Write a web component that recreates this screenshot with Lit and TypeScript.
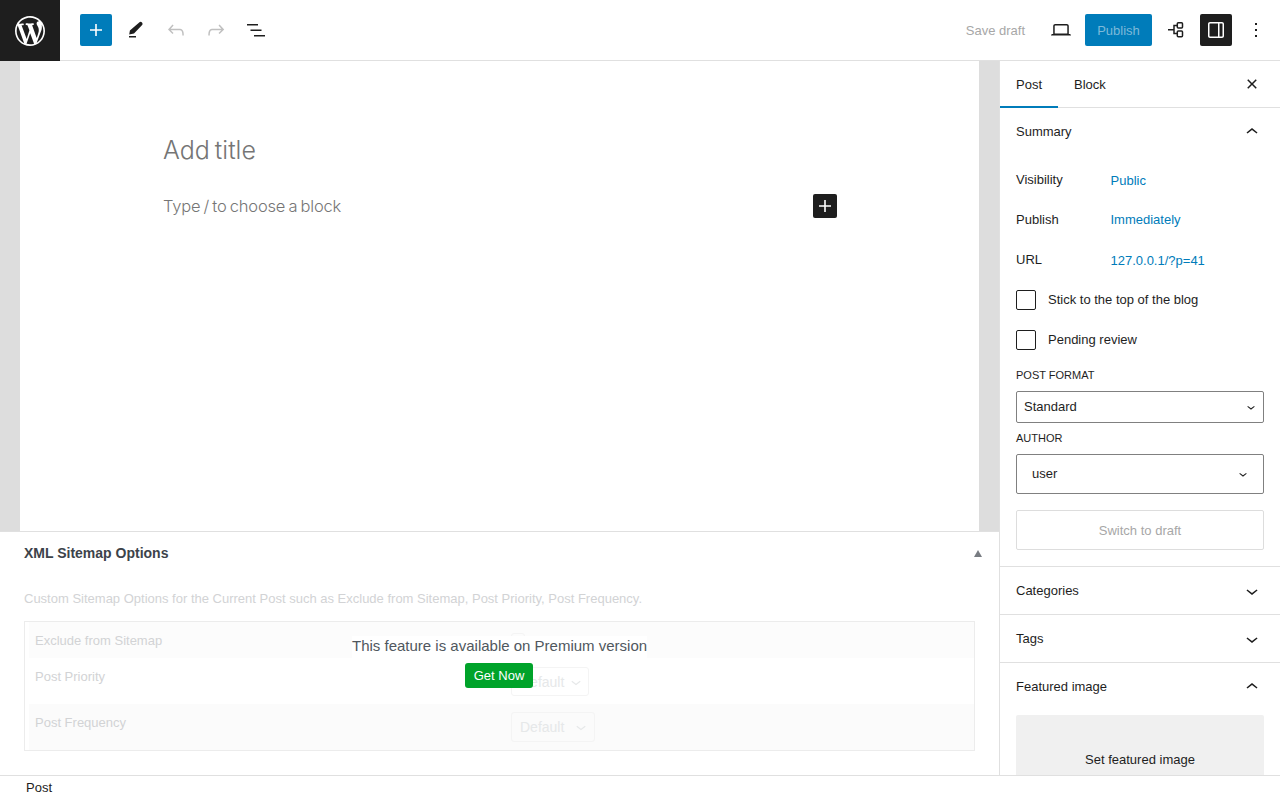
import { LitElement, html, css } from "lit";
import { customElement } from "lit/decorators.js";

const icon = (d: string, size = 24) =>
  html`<svg class="ico" width=${size} height=${size} viewBox="0 0 24 24" fill="currentColor"><path d=${d}></path></svg>`;

const PLUS = "M18 11.2h-5.2V6h-1.6v5.2H6v1.6h5.2V18h1.6v-5.2H18z";
const UP = "M6.5 12.4L12 8l5.5 4.4-.9 1.2L12 10l-4.5 3.6-1-1.2z";
const DOWN = "M17.5 11.6L12 16l-5.5-4.4.9-1.2L12 14l4.6-3.6 1 1.2z";
const CLOSE = "M12 13.06l3.712 3.713 1.061-1.06L13.061 12l3.712-3.712-1.06-1.06L12 10.938 8.288 7.227l-1.061 1.06L10.939 12l-3.712 3.712 1.06 1.061L12 13.061z";
const WP =
  "M20 10c0-5.51-4.49-10-10-10C4.48 0 0 4.49 0 10c0 5.52 4.48 10 10 10 5.51 0 10-4.48 10-10zM7.78 15.37L4.37 6.22c.55-.02 1.17-.08 1.17-.08.5-.06.44-1.13-.06-1.11 0 0-1.45.11-2.37.11-.18 0-.37 0-.58-.01C4.12 2.69 6.87 1.11 10 1.11c2.33 0 4.45.87 6.05 2.34-.68-.11-1.65.39-1.65 1.58 0 .74.45 1.36.9 2.1.35.61.55 1.36.55 2.46 0 1.49-1.4 5-1.4 5l-3.03-8.37c.54-.02.82-.17.82-.17.5-.05.44-1.25-.06-1.22 0 0-1.44.12-2.38.12-.87 0-2.33-.12-2.33-.12-.5-.03-.56 1.2-.06 1.22l.92.08 1.26 3.41zM17.41 10c.24-.64.74-1.87.43-4.25.7 1.29 1.05 2.71 1.05 4.25 0 3.29-1.73 6.24-4.4 7.78.97-2.59 1.94-5.2 2.92-7.78zM6.1 18.09C3.12 16.65 1.11 13.53 1.11 10c0-1.3.23-2.48.72-3.59C3.25 10.3 4.67 14.2 6.1 18.09zm4.03-6.63l2.58 6.98c-.86.29-1.76.45-2.71.45-.79 0-1.57-.11-2.29-.33.81-2.38 1.62-4.74 2.42-7.1z";

@customElement("app-root")
export class AppRoot extends LitElement {
  static styles = css`
    :host {
      display: flex;
      flex-direction: column;
      width: 1280px;
      height: 800px;
      overflow: hidden;
      background: #fff;
      font-family: "Liberation Sans", Arial, sans-serif;
      font-size: 13px;
      color: #1e1e1e;
    }
    .ico { display: block; flex: none; }

    /* top bar */
    .top { height: 60px; flex: none; display: flex; align-items: center; border-bottom: 1px solid #e0e0e0; }
    .logo { width: 60px; height: 61px; margin-bottom: -1px; background: #1e1e1e; color: #fff; display: flex; align-items: center; justify-content: center; }
    .tools { display: flex; align-items: center; gap: 8px; margin-left: 20px; }
    .tb { width: 32px; height: 32px; border-radius: 2px; display: flex; align-items: center; justify-content: center; color: #1e1e1e; }
    .tb.blue { background: #007cba; color: #fff; }
    .tb.off { color: #c0c0c0; }
    .tb.dark { background: #1e1e1e; color: #fff; }
    .right { margin-left: auto; display: flex; align-items: center; }
    .save { color: #a7a7a7; margin-right: 20px; }
    .publish { width: 67px; height: 32px; border-radius: 2px; background: #007cba; color: #7db9d9; display: flex; align-items: center; justify-content: center; margin: 0 8px 0 8px; }
    .r-gap { margin-left: 8px; }
    .more { margin-left: 8px; margin-right: 8px; width: 32px; }

    .main { flex: 1; min-height: 0; display: flex; }
    .left { width: 999px; flex: none; display: flex; flex-direction: column; }
    .side { width: 280px; flex: none; border-left: 1px solid #e0e0e0; overflow: hidden; }

    /* canvas */
    .canvas { height: 470px; flex: none; background: #ddd; padding: 0 20px; box-sizing: border-box; }
    .paper { height: 100%; background: #fff; padding: 72px 142px 0 143px; box-sizing: border-box; display: flex; flex-direction: column; }
    .title { font-family: Inter, sans-serif; font-weight: 300; font-size: 25px; line-height: 34px; color: #757575; word-spacing: -2px; }
    .para { display: flex; align-items: center; justify-content: space-between; margin-top: 27px; height: 24px; }
    .para span { font-family: Inter, sans-serif; font-weight: 300; font-size: 16.5px; color: #757575; letter-spacing: -0.2px; word-spacing: -1.2px; }
    .para i { width: 24px; height: 24px; background: #1e1e1e; color: #fff; border-radius: 2px; display: block; }

    /* meta box */
    .meta { flex: 1; border-top: 1px solid #e0e0e0; padding: 0 24px; min-height: 0; }
    .meta-head { height: 42px; display: flex; align-items: center; justify-content: space-between; font-size: 14px; font-weight: 700; color: #3c434a; }
    .tri { width: 0; height: 0; border-left: 4px solid transparent; border-right: 4px solid transparent; border-bottom: 7px solid #787c82; margin-right: -7px; }
    .desc { color: #d2d3d5; margin-top: 17px; line-height: 16px; }
    .box { position: relative; margin-top: 14px; height: 130px; border: 1px solid #ececec; box-sizing: border-box; padding: 0 0 0 4px; overflow: hidden; color: #d2d3d5; }
    .row { display: flex; padding-left: 6px; }
    .row.a { height: 36px; background: #fcfcfc; }
    .row.b { height: 46px; background: #fff; }
    .row.c { height: 46px; background: #fbfbfb; }
    .row .lab { width: 476px; padding-top: 11px; line-height: 15px; }
    .sel { box-sizing: border-box; border: 1px solid #f4f4f4; border-radius: 3px; display: flex; align-items: center; color: #e6e8e9; font-size: 14px; padding-left: 8px; }
    .row.a .sel { width: 14px; height: 24px; margin-top: 11px; padding: 0; }
    .row.b .sel { width: 78px; height: 29px; margin-top: 9px; gap: 2px; }
    .row.c .sel { width: 84px; height: 30px; margin-top: 8px; gap: 7px; }
    .overlay { position: absolute; left: 327px; top: 14px; width: 295px; display: flex; flex-direction: column; align-items: center; }
    .overlay p { margin: 0; width: 100%; background: #fff; font-size: 15px; line-height: 19px; padding-bottom: 3px; color: #50575e; text-align: center; white-space: nowrap; }
    .get { margin: 5px 1px 0 0; width: 68px; height: 25px; border-radius: 3px; background: #00a32a; color: #fff; display: flex; align-items: center; justify-content: center; }

    /* sidebar */
    .tabs { height: 46px; display: flex; align-items: stretch; border-bottom: 1px solid #e0e0e0; }
    .tab { padding: 0 16px; display: flex; align-items: center; }
    .tab.on { box-shadow: inset 0 -2px 0 #007cba; height: 47px; box-sizing: border-box; margin-bottom: -1px; }
    .tabs .x { margin-left: auto; margin-right: 16px; align-self: center; }
    .p-head { height: 47px; padding: 0 16px; display: flex; align-items: center; justify-content: space-between; }
    .panel { border-bottom: 1px solid #e0e0e0; }
    .panel.summary { padding-bottom: 16px; }
    .p-head + .info { margin-top: 3px; }
    .info { display: flex; padding: 0 16px; height: 40px; }
    .info .k { width: 94.5px; padding-top: 14px; line-height: 15px; }
    .info .v { padding-top: 15px; line-height: 15px; color: #007cba; }
    .info.p .v { padding-top: 14px; }
    .check { display: flex; align-items: center; gap: 12px; padding: 0 16px; height: 40px; }
    .info.u + .check { margin-top: 2px; }
    .check span { padding-bottom: 2px; }
    .check i { display: block; box-sizing: border-box; width: 20px; height: 20px; border: 1px solid #1e1e1e; border-radius: 2px; }
    .cap { padding: 0 16px; font-size: 11px; line-height: 14px; text-transform: uppercase; }
    .cap.first { margin-top: 8px; }
    .field { margin: 9px 16px 0; box-sizing: border-box; height: 32px; border: 1px solid #808080; border-radius: 2px; display: flex; align-items: center; justify-content: space-between; padding: 0 4px 0 7px; }
    .field span { padding-bottom: 2px; }
    .field .ico { width: 16px; height: 16px; }
    .field.big { height: 40px; padding: 0 12px 0 15px; margin-top: 9px; }
    .cap.second { margin-top: 8px; }
    .switch { margin: 16px 16px 0; height: 40px; box-sizing: border-box; border: 1px solid #ddd; border-radius: 2px; color: #a7a7a7; display: flex; align-items: center; justify-content: center; }
    .image { margin: 5px 16px 0; height: 100px; background: #f0f0f0; border-radius: 2px; display: flex; justify-content: center; padding-top: 37px; box-sizing: border-box; line-height: 15px; }

    .status { height: 25px; flex: none; border-top: 1px solid #e0e0e0; box-sizing: border-box; display: flex; align-items: center; padding: 0 0 1px 26px; background: #fff; }
  `;

  private brush() {
    return html`<svg class="ico" width="24" height="24" viewBox="0 0 24 24" fill="currentColor">
      <path d="M5 18h7v1.5H5z"></path>
      <path d="M5.2 16.6l.7-4 9.3-8.2c.9-.8 2-.8 2.8.1.8.9.7 2-.1 2.8L10 15.6z"></path>
    </svg>`;
  }

  private branch() {
    return html`<svg class="ico" width="24" height="24" viewBox="0 0 24 24" fill="none" stroke="currentColor" stroke-width="1.5">
      <path d="M4 11.8h6M10 11.8V7.5h3M10 11.8v3.7h3"></path>
      <rect x="13.3" y="4.8" width="5.2" height="5.2" rx="1"></rect>
      <rect x="13.3" y="13" width="5.2" height="5.7" rx="1"></rect>
    </svg>`;
  }

  render() {
    return html`
      <header class="top">
        <div class="logo">
          <svg width="36" height="36" viewBox="-2 -2 24 24" fill="currentColor"><path d=${WP}></path></svg>
        </div>
        <div class="tools">
          <div class="tb blue">${icon(PLUS)}</div>
          <div class="tb">${this.brush()}</div>
          <div class="tb off">${icon("M18.3 11.7c-.6-.6-1.4-.9-2.3-.9H6.7l2.9-3.3-1.1-1-4.5 5L8.5 16l1-1-2.7-2.7H16c.5 0 .9.2 1.3.5 1 1 1 3.4 1 4.5v.3h1.5v-.2c0-1.5 0-4.3-1.5-5.7z")}</div>
          <div class="tb off">${icon("M15.6 6.5l-1.1 1 2.9 3.3H8c-.9 0-1.7.3-2.3.9-1.4 1.5-1.4 4.2-1.4 5.6v.2h1.5v-.3c0-1.1 0-3.5 1-4.5.3-.3.7-.5 1.3-.5h9.2L14.5 15l1.1 1.1 4.6-4.6-4.6-5z")}</div>
          <div class="tb">${icon("M3 6h11v1.5H3V6zm3.5 5.5h11V13h-11v-1.5zM21 17H10v1.5h11V17z")}</div>
        </div>
        <div class="right">
          <span class="save">Save draft</span>
          <div class="tb">${icon("M20.5 16h-.7V8c0-1.1-.9-2-2-2H6.2c-1.1 0-2 .9-2 2v8h-.7c-.8 0-1.5.7-1.5 1.5h20c0-.8-.7-1.5-1.5-1.5zM5.7 8c0-.3.2-.5.5-.5h11.6c.3 0 .5.2.5.5v7.6H5.7V8z")}</div>
          <div class="publish">Publish</div>
          <div class="tb">${this.branch()}</div>
          <div class="tb dark r-gap">${icon("M18 4H6c-1.1 0-2 .9-2 2v12c0 1.1.9 2 2 2h12c1.1 0 2-.9 2-2V6c0-1.1-.9-2-2-2zm-4 14.5H6c-.3 0-.5-.2-.5-.5V6c0-.3.2-.5.5-.5h8v13zm4.5-.5c0 .3-.2.5-.5.5h-2.5v-13H18c.3 0 .5.2.5.5v12z")}</div>
          <div class="tb more">${icon("M13 19h-2v-2h2v2zm0-6h-2v-2h2v2zm0-6h-2V5h2v2z")}</div>
        </div>
      </header>

      <div class="main">
        <div class="left">
          <div class="canvas">
            <div class="paper">
              <div class="title">Add title</div>
              <div class="para">
                <span>Type / to choose a block</span>
                <i>${icon(PLUS)}</i>
              </div>
            </div>
          </div>
          <section class="meta">
            <div class="meta-head"><span>XML Sitemap Options</span><div class="tri"></div></div>
            <div class="desc">Custom Sitemap Options for the Current Post such as Exclude from Sitemap, Post Priority, Post Frequency.</div>
            <div class="box">
              <div class="row a"><div class="lab">Exclude from Sitemap</div><div class="sel"></div></div>
              <div class="row b"><div class="lab">Post Priority</div><div class="sel">Default ${icon(DOWN, 20)}</div></div>
              <div class="row c"><div class="lab">Post Frequency</div><div class="sel">Default ${icon(DOWN, 20)}</div></div>
              <div class="overlay">
                <p>This feature is available on Premium version</p>
                <div class="get">Get Now</div>
              </div>
            </div>
          </section>
        </div>

        <aside class="side">
          <div class="tabs">
            <div class="tab on">Post</div>
            <div class="tab">Block</div>
            <div class="x">${icon(CLOSE)}</div>
          </div>
          <div class="panel summary">
            <div class="p-head"><span>Summary</span>${icon(UP)}</div>
            <div class="info"><div class="k">Visibility</div><div class="v">Public</div></div>
            <div class="info p"><div class="k">Publish</div><div class="v">Immediately</div></div>
            <div class="info u"><div class="k">URL</div><div class="v">127.0.0.1/?p=41</div></div>
            <div class="check"><i></i><span>Stick to the top of the blog</span></div>
            <div class="check"><i></i><span>Pending review</span></div>
            <div class="cap first">Post Format</div>
            <div class="field"><span>Standard</span>${icon(DOWN)}</div>
            <div class="cap second">Author</div>
            <div class="field big"><span>user</span>${icon(DOWN)}</div>
            <div class="switch">Switch to draft</div>
          </div>
          <div class="panel"><div class="p-head"><span>Categories</span>${icon(DOWN)}</div></div>
          <div class="panel"><div class="p-head"><span>Tags</span>${icon(DOWN)}</div></div>
          <div class="panel">
            <div class="p-head"><span>Featured image</span>${icon(UP)}</div>
            <div class="image">Set featured image</div>
          </div>
        </aside>
      </div>

      <footer class="status">Post</footer>
    `;
  }
}
